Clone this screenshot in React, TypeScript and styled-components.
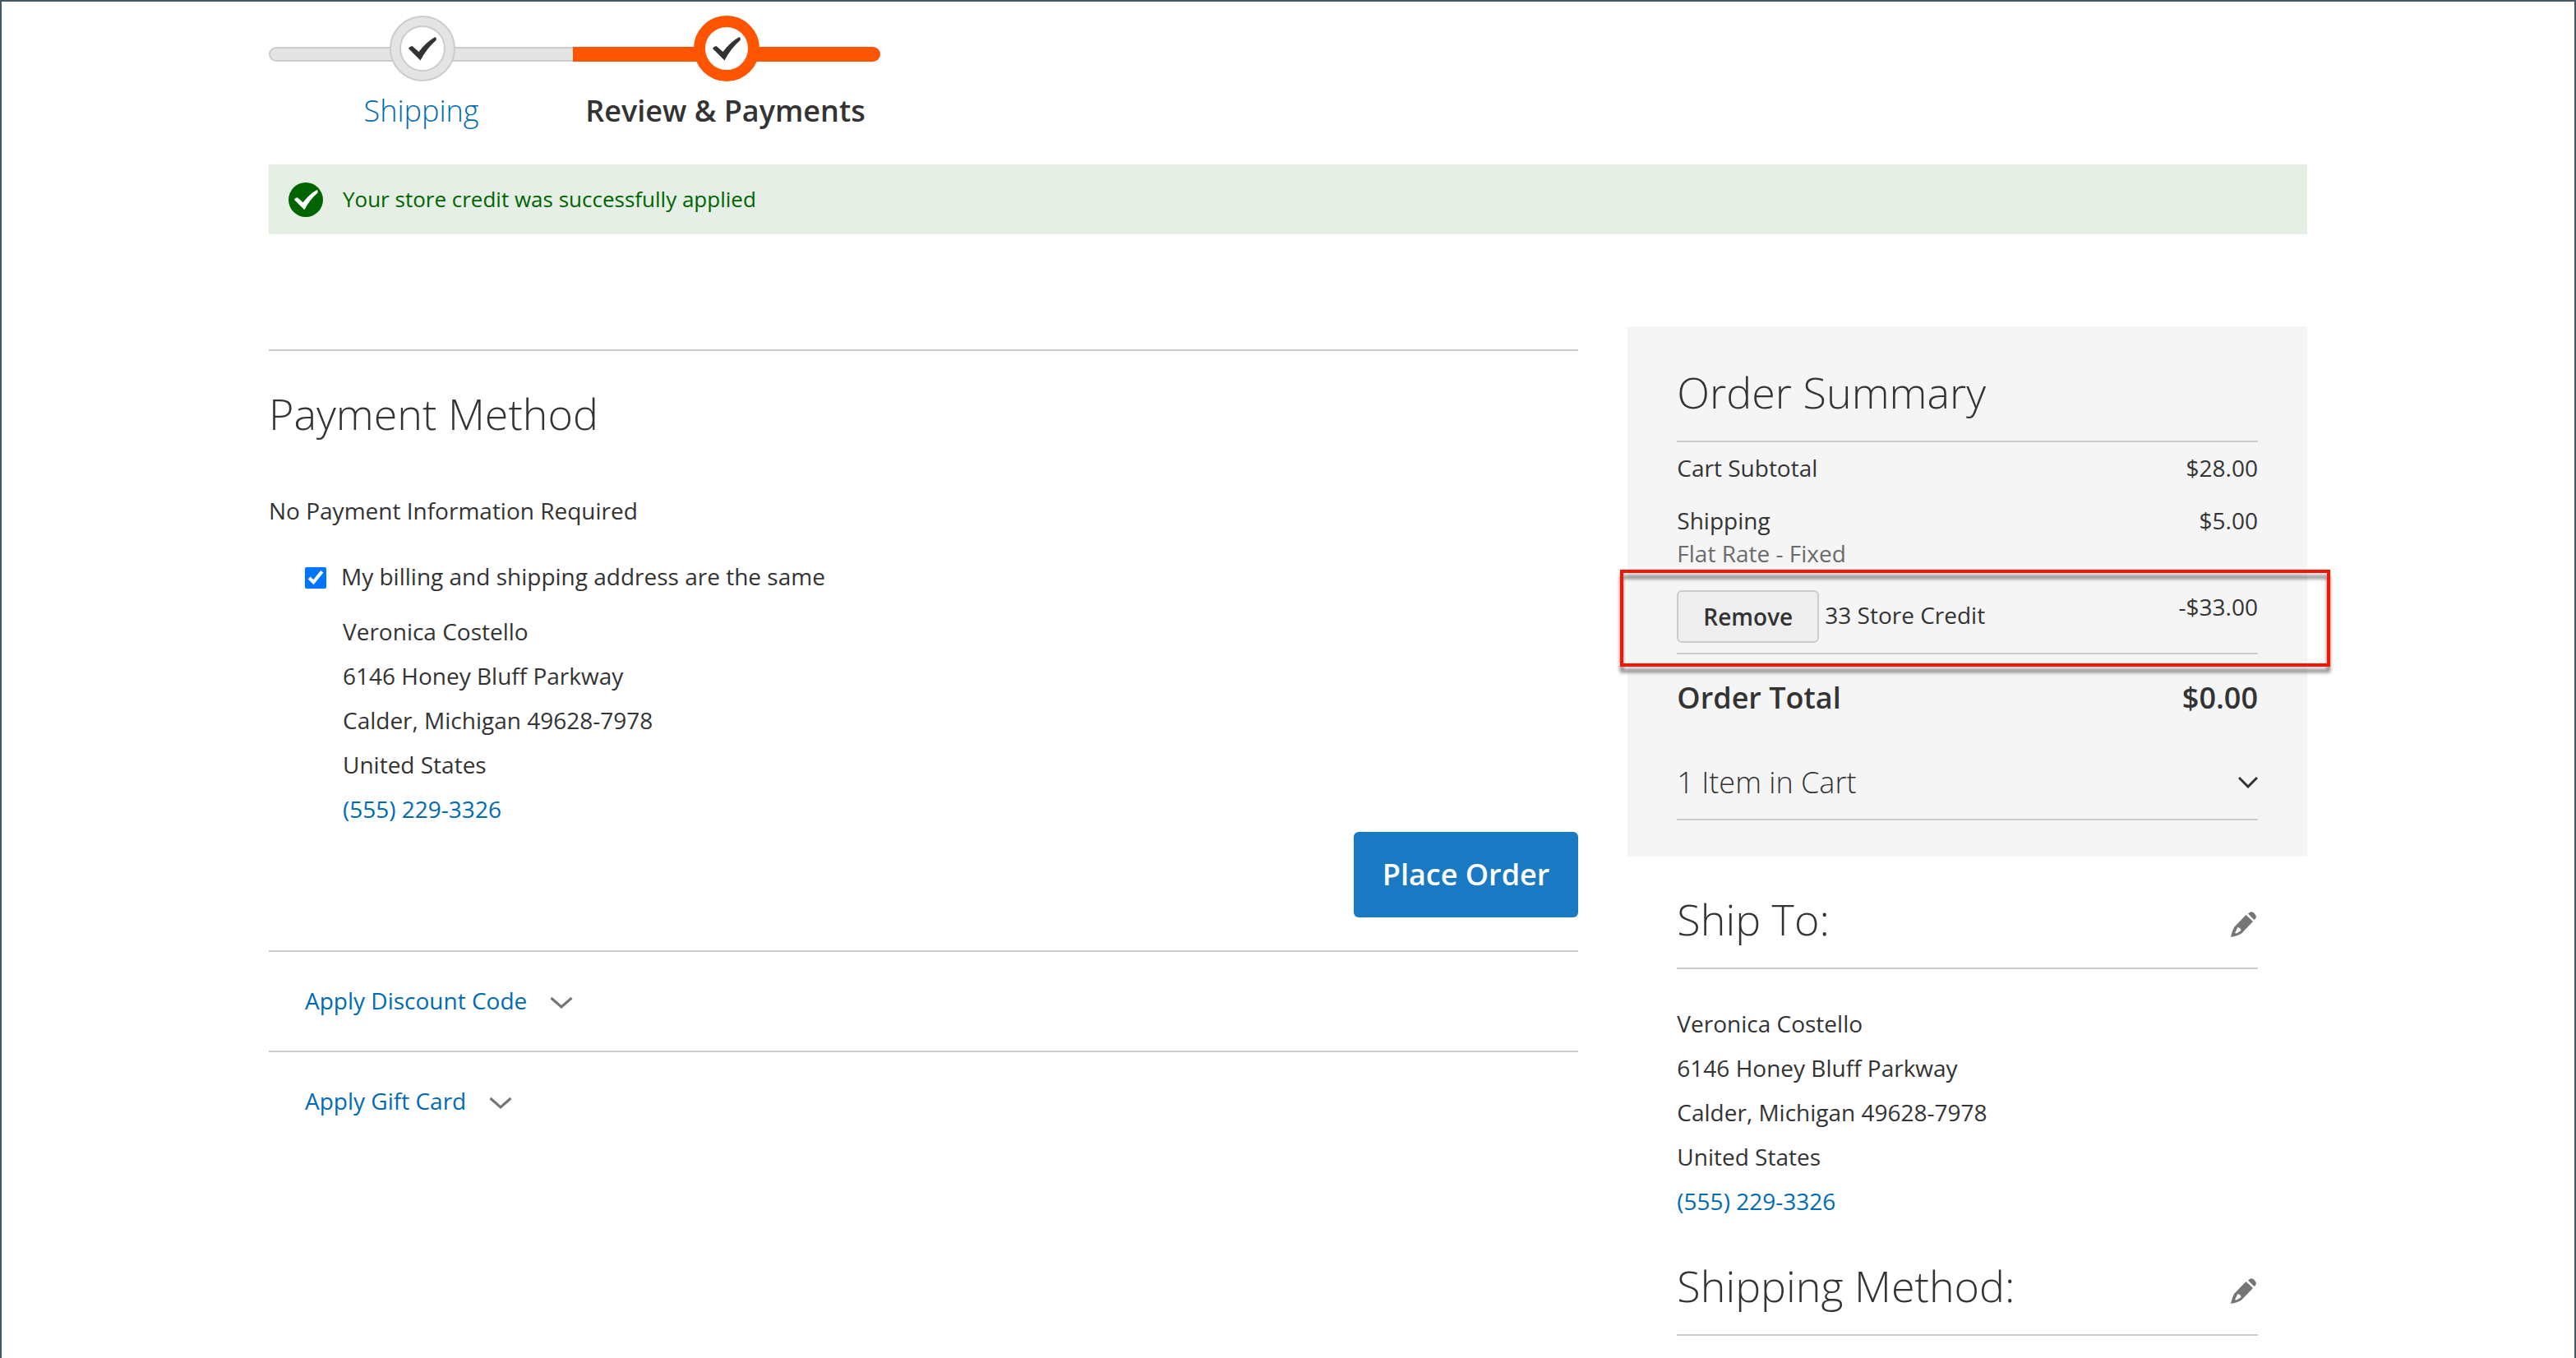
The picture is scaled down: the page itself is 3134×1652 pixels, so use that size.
import React from 'react';
import styled, { createGlobalStyle, css } from 'styled-components';

const GlobalStyle = createGlobalStyle`
  *, *::before, *::after { box-sizing: border-box; }
  body {
    margin: 0;
    background: #fff;
    color: #333;
    font: 400 28px/40px 'Open Sans', 'Noto Sans', sans-serif;
  }
  h2, p, ol { margin: 0; padding: 0; }
  button { font-family: inherit; cursor: pointer; }
`;

const line = '2px solid #ccc';

const Page = styled.div`
  min-height: 100vh;
  padding: 17px 40px 0;
  border: solid #465a65;
  border-width: 2px 2px 0;
`;

const Container = styled.div`
  max-width: 2480px;
  margin: 0 auto;
`;

const Progress = styled.ol`
  display: flex;
  list-style: none;
`;

const Step = styled.li<{ $active?: boolean }>`
  position: relative;
  display: flex;
  flex-direction: column;
  align-items: center;
  gap: 13px;
  width: 374px;
  font-size: 36px;
  line-height: 46px;
  font-weight: ${(p) => (p.$active ? 600 : 300)};

  & + & { margin-left: -4px; }

  &::before {
    content: '';
    position: absolute;
    z-index: 0;
    top: 38px;
    left: 0;
    right: 0;
    height: 18px;
    ${(p) =>
      p.$active
        ? css`background: #ff5501; border-radius: 0 10px 10px 0;`
        : css`background: #e4e4e4; border: ${line}; border-right: 0; border-radius: 10px 0 0 10px;`}
  }
`;

const StepBadge = styled.span<{ $active?: boolean }>`
  position: relative;
  display: grid;
  place-items: center;
  width: 80px;
  height: 80px;
  border-radius: 50%;
  border: 2px solid ${(p) => (p.$active ? '#ff5501' : '#ccc')};
  background: ${(p) => (p.$active ? '#ff5501' : '#e4e4e4')};
`;

const StepHole = styled.span<{ $active?: boolean }>`
  display: grid;
  place-items: center;
  width: 56px;
  height: 56px;
  border-radius: 50%;
  border: 2px solid ${(p) => (p.$active ? '#ff5501' : '#ccc')};
  background: #fff;
`;

const StepLabel = styled.span`
  padding-right: 3px;
`;

const Link = styled.a`
  color: #006bb4;
  text-decoration: none;
`;

const Message = styled.div`
  display: flex;
  align-items: center;
  gap: 24px;
  margin-top: 42px;
  padding: 24px;
  background: #e5efe5;
  color: #006400;
  font-size: 26px;
  line-height: 37px;
`;

const MessageIcon = styled.svg`
  width: 42px;
  height: 42px;
  margin: -3px 0;
`;

const Columns = styled.div`
  display: grid;
  grid-template-columns: minmax(0, 1fr) 33.3333%;
  gap: 60px;
  align-items: start;
  margin-top: 112px;
`;

const Main = styled.main`
  margin-top: 28px;
`;

const Title = styled.h2`
  font-size: 52px;
  line-height: 58px;
  font-weight: 300;
`;

const Payment = styled.section`
  padding: 47px 0 40px;
  border-top: ${line};
`;

const Notice = styled.p`
  margin-top: 69px;
`;

const CheckLabel = styled.label`
  display: flex;
  align-items: center;
  gap: 18px;
  margin: 40px 0 20px 44px;
`;

const Checkbox = styled.input`
  width: 26px;
  height: 26px;
  margin: 4px 0 0;
  accent-color: #0075ff;
`;

const Address = styled.address<{ $indent?: boolean }>`
  display: flex;
  flex-direction: column;
  align-items: flex-start;
  padding-left: ${(p) => (p.$indent ? 90 : 0)}px;
  font-style: normal;
  line-height: 54px;
`;

const Actions = styled.div`
  display: flex;
  justify-content: flex-end;
  padding-top: 1px;
`;

const PlaceOrder = styled.button`
  padding: 28px 35px;
  border: 0;
  border-radius: 6px;
  background: #1979c3;
  color: #fff;
  font-size: 36px;
  line-height: 48px;
  font-weight: 600;
`;

const Option = styled.section`
  padding: 39px 44px 41px;
  border-top: ${line};
`;

const OptionToggle = styled.button`
  display: flex;
  align-items: center;
  gap: 28px;
  padding: 0;
  border: 0;
  background: none;
  color: #006bb4;
  font-size: 28px;
  line-height: 40px;
`;

const ToggleIcon = styled.svg`
  width: 28px;
  height: 16px;
  margin-top: 6px;
  fill: none;
  stroke: #757575;
  stroke-width: 3;
`;

const Summary = styled.section`
  padding: 51px 60px 44px;
  background: #f5f5f5;
`;

const Totals = styled.table`
  width: 100%;
  margin-top: 30px;
  border-top: ${line};
  border-spacing: 0;

  th, td {
    padding: 11px 0 13px;
    font-weight: 400;
    text-align: left;
    vertical-align: top;
  }
  td { text-align: right; }
`;

const Muted = styled.div`
  color: #6b6b6b;
`;

const CreditRow = styled.tr`
  position: relative;

  && th, && td { padding: 12px 0; }
`;

const Credit = styled.div`
  display: flex;
  align-items: flex-start;
  gap: 7px;
  line-height: 60px;
`;

const Remove = styled.button`
  padding: 10px 30px;
  border: ${line};
  border-radius: 6px;
  background: #eee;
  color: #333;
  font-size: 28px;
  line-height: 40px;
  font-weight: 600;
`;

const Highlight = styled.div`
  position: absolute;
  inset: -13px -88px -17px -69px;
  border: 4px solid #ff1100;
  filter: drop-shadow(0 7px 2px rgba(0, 0, 0, 0.5));
  pointer-events: none;
`;

const GrandRow = styled.tr`
  && th, && td {
    padding: 29px 0 0;
    border-top: ${line};
    font-size: 36px;
    line-height: 48px;
    font-weight: 600;
  }
`;

const CartToggle = styled.button`
  display: flex;
  align-items: center;
  justify-content: space-between;
  width: 100%;
  margin-top: 55px;
  padding: 0 0 20px;
  border: 0;
  border-bottom: ${line};
  background: none;
  color: #333;
  font-size: 36px;
  line-height: 48px;
  font-weight: 300;
  text-align: left;
`;

const CartIcon = styled.svg`
  width: 24px;
  height: 14px;
  fill: none;
  stroke: #333;
  stroke-width: 3;
`;

const Info = styled.section`
  margin: 47px 60px 0;
`;

const InfoHead = styled.div`
  display: flex;
  align-items: center;
  justify-content: space-between;
  margin-bottom: 39px;
  padding-bottom: 30px;
  border-bottom: ${line};
`;

const Edit = styled.button`
  display: grid;
  padding: 12px 2px 0;
  border: 0;
  background: none;
`;

const CHECK = 'M0 14Q1 11.500 4.500 11L12.500 18Q22 5.500 32.500 0Q34.500 1 33.500 4Q22 14 14.500 28.500Z';

const StepCheck = () => (
  <svg width="34" height="29" viewBox="0 0 34 29" fill="#333" aria-hidden="true">
    <path d={CHECK} />
  </svg>
);

const Pencil = () => (
  <svg width="31" height="31" viewBox="0 0 31 31" fill="#757575" aria-hidden="true">
    <path d="M21 2.500L23 1Q26 -1 29 2.500Q32 6 30 8.500L28.500 10Z" />
    <path fillRule="evenodd" d="M18.500 4L27 12L13 26.500Q8 29.500 0 31Q1.500 24 4 19Z M8.500 19L5 26L7 26.500L12.500 23Q12 19.500 8.500 19Z" />
  </svg>
);

const CustomerAddress = ({ indent }: { indent?: boolean }) => (
  <Address $indent={indent}>
    <span>Veronica Costello</span>
    <span>6146 Honey Bluff Parkway</span>
    <span>Calder, Michigan 49628-7978</span>
    <span>United States</span>
    <Link href="tel:5552293326">(555) 229-3326</Link>
  </Address>
);

const OptionRow = ({ label }: { label: string }) => (
  <Option>
    <OptionToggle type="button">
      {label}
      <ToggleIcon viewBox="0 0 28 16" aria-hidden="true">
        <path d="M1.500 2L14 13L26.500 2" />
      </ToggleIcon>
    </OptionToggle>
  </Option>
);

const InfoTitle = ({ title }: { title: string }) => (
  <InfoHead>
    <Title>{title}</Title>
    <Edit type="button" aria-label="Edit">
      <Pencil />
    </Edit>
  </InfoHead>
);

export default function App() {
  return (
    <Page>
      <GlobalStyle />
      <Container>
        <Progress>
          <Step>
            <StepBadge>
              <StepHole><StepCheck /></StepHole>
            </StepBadge>
            <StepLabel><Link href="#shipping">Shipping</Link></StepLabel>
          </Step>
          <Step $active>
            <StepBadge $active>
              <StepHole $active><StepCheck /></StepHole>
            </StepBadge>
            <StepLabel>Review &amp; Payments</StepLabel>
          </Step>
        </Progress>

        <Message role="status">
          <MessageIcon viewBox="0 0 42 42" aria-hidden="true">
            <circle cx="21" cy="21" r="21" fill="#006400" />
            <path d={CHECK} fill="#fff" transform="translate(7 9) scale(.85)" />
          </MessageIcon>
          Your store credit was successfully applied
        </Message>

        <Columns>
          <Main>
            <Payment>
              <Title>Payment Method</Title>
              <Notice>No Payment Information Required</Notice>
              <CheckLabel>
                <Checkbox type="checkbox" defaultChecked />
                My billing and shipping address are the same
              </CheckLabel>
              <CustomerAddress indent />
              <Actions>
                <PlaceOrder type="button">Place Order</PlaceOrder>
              </Actions>
            </Payment>
            <OptionRow label="Apply Discount Code" />
            <OptionRow label="Apply Gift Card" />
          </Main>

          <aside>
            <Summary>
              <Title>Order Summary</Title>
              <Totals>
                <tbody>
                  <tr>
                    <th scope="row">Cart Subtotal</th>
                    <td>$28.00</td>
                  </tr>
                  <tr>
                    <th scope="row">
                      Shipping
                      <Muted>Flat Rate - Fixed</Muted>
                    </th>
                    <td>$5.00</td>
                  </tr>
                  <CreditRow>
                    <th scope="row">
                      <Credit>
                        <Remove type="button">Remove</Remove>
                        33 Store Credit
                      </Credit>
                      <Highlight />
                    </th>
                    <td>-$33.00</td>
                  </CreditRow>
                  <GrandRow>
                    <th scope="row">Order Total</th>
                    <td>$0.00</td>
                  </GrandRow>
                </tbody>
              </Totals>
              <CartToggle type="button">
                1 Item in Cart
                <CartIcon viewBox="0 0 24 14" aria-hidden="true">
                  <path d="M1 1L12 12L23 1" />
                </CartIcon>
              </CartToggle>
            </Summary>
            <Info>
              <InfoTitle title="Ship To:" />
              <CustomerAddress />
            </Info>
            <Info>
              <InfoTitle title="Shipping Method:" />
            </Info>
          </aside>
        </Columns>
      </Container>
    </Page>
  );
}
